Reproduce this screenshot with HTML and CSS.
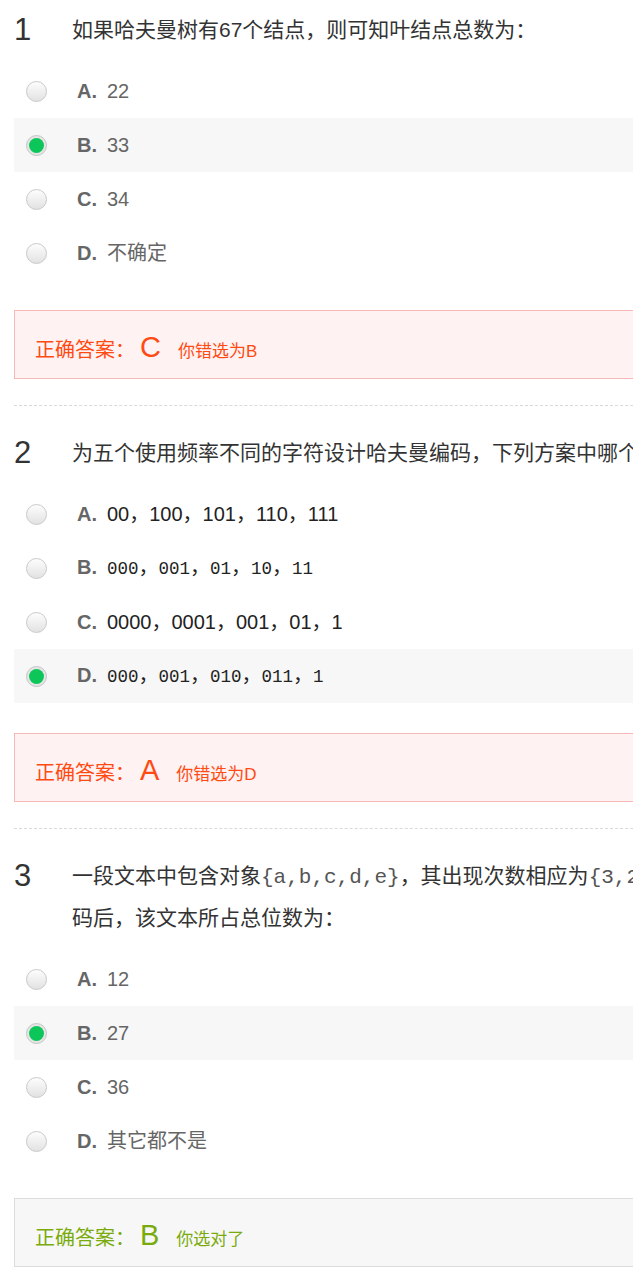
FILE: index.html
```html
<!DOCTYPE html>
<html lang="zh-CN">
<head>
<meta charset="utf-8">
<title>哈夫曼树测验</title>
<link rel="stylesheet" href="styles.css">
</head>
<body>
<div class="page">

  <section class="question">
    <div class="q-head">
      <span class="q-num">1</span>
      <div class="q-text">如果哈夫曼树有67个结点，则可知叶结点总数为：</div>
    </div>
    <ul class="options">
      <li class="option"><span class="radio"></span><span class="opt-body"><span class="opt-label">A.</span><span class="opt-text">22</span></span></li>
      <li class="option selected"><span class="radio checked"></span><span class="opt-body"><span class="opt-label">B.</span><span class="opt-text">33</span></span></li>
      <li class="option"><span class="radio"></span><span class="opt-body"><span class="opt-label">C.</span><span class="opt-text">34</span></span></li>
      <li class="option"><span class="radio"></span><span class="opt-body"><span class="opt-label">D.</span><span class="opt-text">不确定</span></span></li>
    </ul>
    <div class="answer wrong"><span class="ans-title">正确答案：</span><span class="ans-letter">C</span><span class="ans-note">你错选为B</span></div>
  </section>

  <hr class="divider">

  <section class="question">
    <div class="q-head">
      <span class="q-num">2</span>
      <div class="q-text">为五个使用频率不同的字符设计哈夫曼编码，下列方案中哪个可能是所有字符的编码？</div>
    </div>
    <ul class="options">
      <li class="option"><span class="radio"></span><span class="opt-body"><span class="opt-label">A.</span><span class="opt-text dark">00，100，101，110，111</span></span></li>
      <li class="option"><span class="radio"></span><span class="opt-body"><span class="opt-label">B.</span><span class="opt-text dark"><span class="mono">000</span>，<span class="mono">001</span>，<span class="mono">01</span>，<span class="mono">10</span>，<span class="mono">11</span></span></span></li>
      <li class="option"><span class="radio"></span><span class="opt-body"><span class="opt-label">C.</span><span class="opt-text dark">0000，0001，001，01，1</span></span></li>
      <li class="option selected"><span class="radio checked"></span><span class="opt-body"><span class="opt-label">D.</span><span class="opt-text dark"><span class="mono">000</span>，<span class="mono">001</span>，<span class="mono">010</span>，<span class="mono">011</span>，<span class="mono">1</span></span></span></li>
    </ul>
    <div class="answer wrong"><span class="ans-title">正确答案：</span><span class="ans-letter">A</span><span class="ans-note">你错选为D</span></div>
  </section>

  <hr class="divider">

  <section class="question">
    <div class="q-head">
      <span class="q-num">3</span>
      <div class="q-text">一段文本中包含对象<span class="code">{a,b,c,d,e}</span>，其出现次数相应为<span class="code">{3,2,4,2,1}</span>，则经过哈夫曼编<br>码后，该文本所占总位数为：</div>
    </div>
    <ul class="options">
      <li class="option"><span class="radio"></span><span class="opt-body"><span class="opt-label">A.</span><span class="opt-text">12</span></span></li>
      <li class="option selected"><span class="radio checked"></span><span class="opt-body"><span class="opt-label">B.</span><span class="opt-text">27</span></span></li>
      <li class="option"><span class="radio"></span><span class="opt-body"><span class="opt-label">C.</span><span class="opt-text">36</span></span></li>
      <li class="option"><span class="radio"></span><span class="opt-body"><span class="opt-label">D.</span><span class="opt-text">其它都不是</span></span></li>
    </ul>
    <div class="answer right"><span class="ans-title">正确答案：</span><span class="ans-letter">B</span><span class="ans-note">你选对了</span></div>
  </section>

</div>
</body>
</html>
```
FILE: styles.css
```css
html, body {
  margin: 0;
  padding: 0;
  overflow: hidden;
  background: #fff;
}

body {
  font-family: "Liberation Sans", "Noto Sans CJK SC", sans-serif;
  color: #333;
}

.page {
  width: 1100px;
  padding: 10px 0 0 14px;
}

.question {
  margin: 0;
}

.q-head {
  display: flex;
  align-items: flex-start;
  margin-bottom: 14px;
}

.q-num {
  flex: 0 0 58px;
  font-size: 31px;
  line-height: 40px;
  color: #333;
}

.q-text {
  font-size: 21px;
  line-height: 40px;
  color: #333;
  white-space: nowrap;
}

.code {
  font-family: "Liberation Mono", "Noto Sans CJK SC", monospace;
  font-size: 21px;
  color: #555;
}

.options {
  list-style: none;
  margin: 0;
  padding: 0;
}

.option {
  display: flex;
  align-items: center;
  height: 54px;
  padding-left: 12px;
}

.option.selected {
  background: #f7f7f7;
}

.radio {
  box-sizing: border-box;
  width: 21px;
  height: 21px;
  border-radius: 50%;
  border: 1px solid #c9c9c9;
  background: linear-gradient(#fdfdfd, #e2e2e2);
  margin-right: 30px;
  display: inline-flex;
  align-items: center;
  justify-content: center;
  flex: 0 0 auto;
}

.radio.checked {
  border-color: #c4c4c4;
  background: #e6e6e6;
}

.radio.checked::after {
  content: "";
  width: 15px;
  height: 15px;
  border-radius: 50%;
  background: #0cc65a;
}

.opt-body {
  font-size: 20px;
  line-height: 24px;
  white-space: nowrap;
}

.opt-label {
  font-weight: bold;
  color: #666;
  margin-right: 10px;
}

.opt-text {
  color: #666;
}

.opt-text.dark {
  color: #222;
}

.mono {
  font-family: "Liberation Mono", monospace;
  font-size: 17.5px;
}

.answer {
  box-sizing: border-box;
  height: 69px;
  margin-top: 30px;
  padding: 22px 0 0 20px;
  display: flex;
  align-items: baseline;
  border: 1px solid;
}

.answer.wrong {
  background: #fff2f2;
  border-color: #f8b8b8;
  color: #ff4a12;
}

.answer.right {
  background: #f7f7f7;
  border-color: #dcdcdc;
  color: #7aab0c;
}

.ans-title {
  font-size: 20px;
  line-height: 28px;
}

.ans-letter {
  font-size: 29px;
  line-height: 28px;
  margin-left: 5px;
}

.ans-note {
  font-size: 17px;
  line-height: 28px;
  margin-left: 17px;
}

.divider {
  border: 0;
  border-top: 1px dashed #dadada;
  margin: 26px 0 27px 0;
  height: 0;
}
```
